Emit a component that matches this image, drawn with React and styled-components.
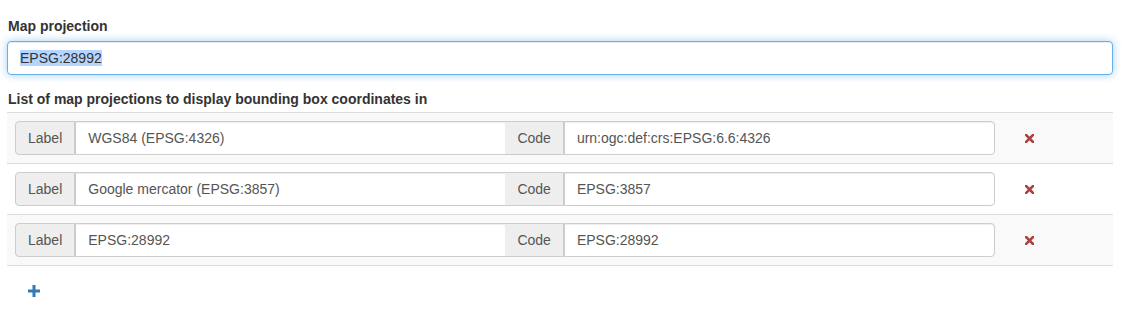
import React, { useEffect, useRef } from 'react'
import styled, { createGlobalStyle } from 'styled-components'

const projections = [
  { label: 'WGS84 (EPSG:4326)', code: 'urn:ogc:def:crs:EPSG:6.6:4326' },
  { label: 'Google mercator (EPSG:3857)', code: 'EPSG:3857' },
  { label: 'EPSG:28992', code: 'EPSG:28992' },
]

const GlobalStyle = createGlobalStyle`
  * { box-sizing: border-box; }
  body {
    margin: 0;
    background: #fff;
    font-family: "Liberation Sans", Arial, sans-serif;
    font-size: 14px;
    line-height: 20px;
    color: #333;
  }
  ::selection { background: #b4d5fe; color: #333; }
`

const RemoveIcon = () => (
  <svg width="9" height="9" viewBox="0 0 9 9">
    <path d="M1 1 L8 8 M8 1 L1 8" stroke="#a94442" strokeWidth="2.6" strokeLinecap="square" />
  </svg>
)

const PlusIcon = () => (
  <svg width="12" height="12" viewBox="0 0 12 12">
    <path d="M4.5 0 H7.5 V4.5 H12 V7.5 H7.5 V12 H4.5 V7.5 H0 V4.5 H4.5 Z" fill="#337ab7" />
  </svg>
)

export default () => {
  const mainInput = useRef(null)

  useEffect(() => {
    if (mainInput.current) {
      mainInput.current.focus()
      mainInput.current.select()
    }
  }, [])

  return (
    <Wrapper>
      <GlobalStyle />
      <FormGroup>
        <FieldLabel>Map projection</FieldLabel>
        <MainInput ref={mainInput} defaultValue='EPSG:28992' />
      </FormGroup>

      <ListLabel>List of map projections to display bounding box coordinates in</ListLabel>
      <Table>
        <tbody>
          {projections.map((p, i) => (
            <Row key={i} striped={i % 2 === 0}>
              <GroupCell>
                <InputGroup>
                  <Addon first>Label</Addon>
                  <GroupInput defaultValue={p.label} />
                  <Addon>Code</Addon>
                  <GroupInput last defaultValue={p.code} />
                </InputGroup>
              </GroupCell>
              <ActionCell>
                <IconButton type='button' aria-label='Remove'>
                  <RemoveIcon />
                </IconButton>
              </ActionCell>
            </Row>
          ))}
        </tbody>
      </Table>

      <AddButton type='button' aria-label='Add'>
        <PlusIcon />
      </AddButton>
    </Wrapper>
  )
}

const Wrapper = styled.div`
  padding: 16px 26px 0 7px;
`

const FormGroup = styled.div`
  margin-bottom: 14px;
`

const FieldLabel = styled.label`
  display: block;
  font-weight: bold;
  margin-bottom: 5px;
  padding-left: 1px;
`

const ListLabel = styled(FieldLabel)`
  margin-bottom: 3px;
`

const MainInput = styled.input`
  display: block;
  width: 100%;
  height: 34px;
  padding: 6px 12px;
  font: inherit;
  color: #555;
  background: #fff;
  border: 1px solid #66afe9;
  border-radius: 4px;
  outline: 0;
  box-shadow: inset 0 1px 1px rgba(0, 0, 0, 0.075), 0 0 8px rgba(102, 175, 233, 0.6);
`

const Table = styled.table`
  width: 100%;
  border-collapse: collapse;
  border-spacing: 0;
  border-bottom: 1px solid #ddd;
`

const Row = styled.tr`
  background: ${p => (p.striped ? '#f9f9f9' : '#fff')};
  border-top: 1px solid #ddd;
`

const GroupCell = styled.td`
  padding: 8px;
  width: 996px;
`

const ActionCell = styled.td`
  padding: 8px;
  vertical-align: middle;
`

const InputGroup = styled.div`
  display: flex;
  height: 34px;
`

const Addon = styled.span`
  display: flex;
  align-items: center;
  padding: 6px 12px;
  background: #eee;
  color: #555;
  border: 1px solid #ccc;
  border-left-width: ${p => (p.first ? '1px' : '0')};
  border-radius: ${p => (p.first ? '4px 0 0 4px' : '0')};
  white-space: nowrap;
`

const GroupInput = styled.input`
  flex: 1;
  min-width: 0;
  height: 34px;
  padding: 6px 12px;
  font: inherit;
  color: #555;
  background: #fff;
  border: 1px solid #ccc;
  border-right-width: ${p => (p.last ? '1px' : '0')};
  border-radius: ${p => (p.last ? '0 4px 4px 0' : '0')};
  box-shadow: inset 0 1px 1px rgba(0, 0, 0, 0.075);
  outline: 0;
`

const IconButton = styled.button`
  display: flex;
  align-items: center;
  height: 34px;
  padding: 0 12px 0 14px;
  background: transparent;
  border: 0;
  cursor: pointer;
`

const AddButton = styled.button`
  display: flex;
  align-items: center;
  margin: 13px 0 0 9px;
  padding: 6px 12px;
  background: transparent;
  border: 0;
  cursor: pointer;
`
